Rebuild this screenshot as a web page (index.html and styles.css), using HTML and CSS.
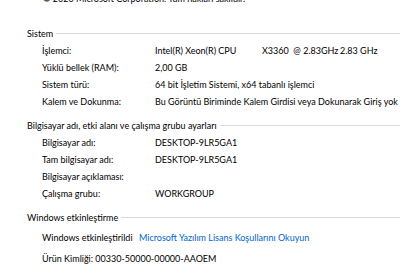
FILE: index.html
```html
<!DOCTYPE html>
<html lang="tr">
<head>
    <meta charset="UTF-8">
    <title>Sistem</title>
    <link rel="stylesheet" href="styles.css">
</head>
<body>
    <div class="copyright">© 2020 Microsoft Corporation. Tüm hakları saklıdır.</div>

    <!-- Sistem -->
    <div class="group-title">Sistem</div>
    <div class="rows">
        <div class="label">İşlemci:</div>
        <div class="value cpu">
            <span class="cpu-name">Intel(R) Xeon(R) CPU</span>
            <span class="cpu-model">X3360&nbsp; @ 2.83GHz</span>
            <span>2.83 GHz</span>
        </div>
        <div class="label">Yüklü bellek (RAM):</div>
        <div class="value">2,00 GB</div>
        <div class="label">Sistem türü:</div>
        <div class="value">64 bit İşletim Sistemi, x64 tabanlı işlemci</div>
        <div class="label">Kalem ve Dokunma:</div>
        <div class="value">Bu Görüntü Biriminde Kalem Girdisi veya Dokunarak Giriş yok</div>
    </div>

    <!-- Bilgisayar adı -->
    <div class="group-title">Bilgisayar adı, etki alanı ve çalışma grubu ayarları</div>
    <div class="rows">
        <div class="label">Bilgisayar adı:</div>
        <div class="value">DESKTOP-9LR5GA1</div>
        <div class="label">Tam bilgisayar adı:</div>
        <div class="value">DESKTOP-9LR5GA1</div>
        <div class="label">Bilgisayar açıklaması:</div>
        <div class="value"></div>
        <div class="label">Çalışma grubu:</div>
        <div class="value">WORKGROUP</div>
    </div>

    <!-- Windows etkinleştirme -->
    <div class="group-title">Windows etkinleştirme</div>
    <div class="activation">
        <div class="act-row">
            <span class="act-status">Windows etkinleştirildi</span>
            <a href="#" class="link">Microsoft Yazılım Lisans Koşullarını Okuyun</a>
        </div>
        <div class="act-row">Ürün Kimliği: 00330-50000-00000-AAOEM</div>
    </div>
</body>
</html>
```

FILE: styles.css
```css
body {
    margin: 0;
    background: #fff;
    color: #000;
    font-family: Lato, "Noto Sans", sans-serif;
    font-size: 9px;
    line-height: 17px;
    overflow: hidden;
}

.copyright {
    margin-top: -10px;
    padding-left: 43px;
    white-space: nowrap;
}

.group-title {
    display: flex;
    align-items: center;
    padding-left: 27px;
    margin-top: 18px;
    white-space: nowrap;
}

.group-title::after {
    content: "";
    flex: 1;
    height: 1px;
    margin-left: 3px;
    background: #dadada;
}

.rows {
    display: grid;
    grid-template-columns: 113px 1fr;
    grid-auto-rows: 17px;
    padding-left: 42px;
}

.rows + .group-title {
    margin-top: 7px;
}

.label,
.value {
    white-space: nowrap;
}

.cpu {
    display: flex;
}

.cpu-name {
    flex: none;
    width: 107px;
}

.cpu-model {
    flex: none;
    width: 78px;
    overflow: visible;
}

.activation {
    display: flex;
    flex-direction: column;
    gap: 4px;
    padding-left: 42px;
    padding-top: 3px;
}

.act-row {
    display: flex;
    white-space: nowrap;
}

.act-status {
    flex: none;
    width: 97px;
}

.link {
    color: #0066cc;
    text-decoration: none;
}
```
